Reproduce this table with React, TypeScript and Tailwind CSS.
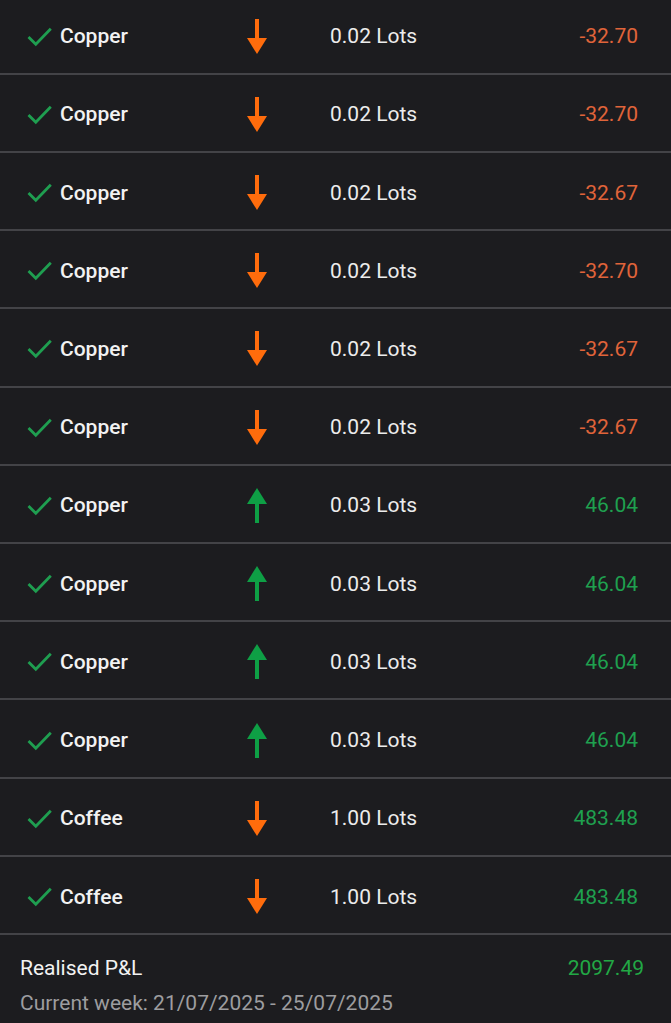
const trades = [
  { name: 'Copper', dir: 'down', lots: '0.02', pnl: '-32.70' },
  { name: 'Copper', dir: 'down', lots: '0.02', pnl: '-32.70' },
  { name: 'Copper', dir: 'down', lots: '0.02', pnl: '-32.67' },
  { name: 'Copper', dir: 'down', lots: '0.02', pnl: '-32.70' },
  { name: 'Copper', dir: 'down', lots: '0.02', pnl: '-32.67' },
  { name: 'Copper', dir: 'down', lots: '0.02', pnl: '-32.67' },
  { name: 'Copper', dir: 'up', lots: '0.03', pnl: '46.04' },
  { name: 'Copper', dir: 'up', lots: '0.03', pnl: '46.04' },
  { name: 'Copper', dir: 'up', lots: '0.03', pnl: '46.04' },
  { name: 'Copper', dir: 'up', lots: '0.03', pnl: '46.04' },
  { name: 'Coffee', dir: 'down', lots: '1.00', pnl: '483.48' },
  { name: 'Coffee', dir: 'down', lots: '1.00', pnl: '483.48' },
];

const CheckIcon = () => (
  <svg width="25" height="21" viewBox="0 0 25 21" fill="none">
    <path d="M1.5 11 L8.8 18.3 L23.8 2.8" stroke="#1f9e50" strokeWidth="2.8" />
  </svg>
);

const Arrow = ({ up }: { up: boolean }) => (
  <svg width="20" height="35" viewBox="0 0 20 35" className={up ? 'rotate-180' : ''}>
    <rect x="8" y="0" width="4" height="20" fill={up ? '#0e9f45' : '#ff6c0c'} />
    <path d="M0 19 L20 19 L10 35 Z" fill={up ? '#0e9f45' : '#ff6c0c'} />
  </svg>
);

export default function App() {
  return (
    <div
      className="w-full h-[1023px] overflow-hidden bg-[#1c1c1f] text-[#f2f2f2]"
      style={{ fontFamily: 'Roboto, "Noto Sans", sans-serif' }}
    >
      <div className="-mt-[3.5px]">
        {trades.map((t, i) => {
          const neg = t.pnl.startsWith('-');
          return (
            <div
              key={i}
              className="h-[78.23px] border-b-2 border-[#434347] flex items-center pt-[3px]"
            >
              <div className="w-[247px] flex items-center pl-[27px]">
                <CheckIcon />
                <span className="ml-[8px] text-[21px] font-medium leading-6">{t.name}</span>
              </div>
              <div className="w-[20px] flex justify-center">
                <Arrow up={t.dir === 'up'} />
              </div>
              <span className="ml-[63px] flex-1 text-[21px] leading-6 text-[#ececec]">
                {t.lots} Lots
              </span>
              <span
                className={`pr-[33px] text-[21px] leading-6 ${neg ? 'text-[#e0643a]' : 'text-[#1fa04f]'}`}
              >
                {t.pnl}
              </span>
            </div>
          );
        })}
      </div>
      <div className="px-[20px] pr-[27px] pt-[21px]">
        <div className="flex justify-between items-center">
          <span className="text-[21px] leading-6 text-[#f2f2f2]">Realised P&amp;L</span>
          <span className="text-[21px] leading-6 text-[#22a845]">2097.49</span>
        </div>
        <div className="mt-[11px] text-[21px] leading-6 text-[#9d9d9f]">
          Current week: 21/07/2025 - 25/07/2025
        </div>
      </div>
    </div>
  );
}
